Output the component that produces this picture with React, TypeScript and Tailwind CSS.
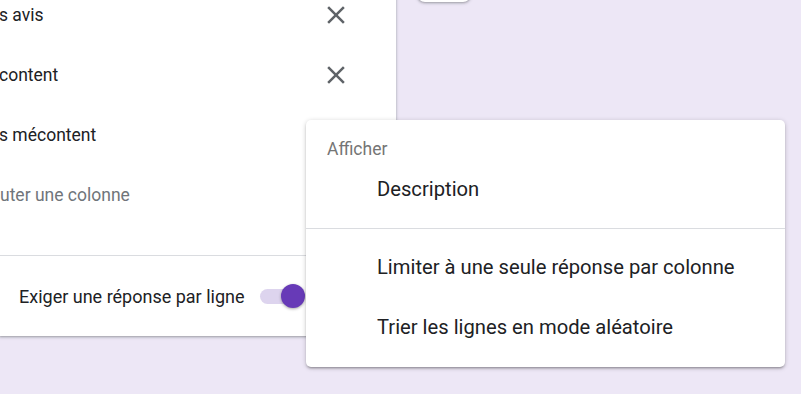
import React from "react";

function CloseIcon() {
  return (
    <svg viewBox="0 0 24 24" className="h-[30px] w-[30px] fill-[#5f6368]">
      <path d="M19 6.41 17.59 5 12 10.59 6.41 5 5 6.41 10.59 12 5 17.59 6.41 19 12 13.41 17.59 19 19 17.59 13.41 12z" />
    </svg>
  );
}

const rows = [
  { label: "s avis", close: true },
  { label: "content", close: true },
  { label: "s mécontent", close: false },
];

export default function App() {
  return (
    <div className="relative h-[394px] w-[801px] overflow-hidden bg-[#ede7f6] font-['Roboto',sans-serif]">
      <div className="flex items-start gap-[21px]">
        {/* grid question card */}
        <div className="-mt-[15px] w-[396px] rounded-br-[10px] bg-white shadow-[0_1px_2px_0_rgba(60,64,67,0.3),0_1px_3px_1px_rgba(60,64,67,0.15)]">
          {rows.map((r) => (
            <div key={r.label} className="flex h-[60px] items-center justify-between pr-[45px]">
              <span className="-ml-px text-[17.5px] text-[#202124]">{r.label}</span>
              {r.close && <CloseIcon />}
            </div>
          ))}
          <div className="flex h-[60px] items-center">
            <span className="text-[17.5px] text-[#70757a]">uter une colonne</span>
          </div>
          <div className="mt-[30px] border-t border-[#dadce0]" />
          <div className="flex h-[80px] items-center pl-[19px]">
            <span className="text-[18px] text-[#202124]">Exiger une réponse par ligne</span>
            <div className="relative ml-[15px] h-[15px] w-[42px] rounded-full bg-[#ddd4ee]">
              <div className="absolute -right-[3px] -top-[5px] h-[24px] w-[24px] rounded-full bg-[#673ab7] shadow-[0_1px_3px_rgba(0,0,0,0.35)]" />
            </div>
          </div>
        </div>
        {/* right floating toolbar, mostly scrolled off */}
        <div className="-mt-[20px] h-[22px] w-[54px] rounded-b-[8px] bg-white shadow-[0_1px_2px_0_rgba(60,64,67,0.3),0_1px_3px_1px_rgba(60,64,67,0.15)]" />
      </div>

      {/* overflow menu */}
      <div className="absolute left-[306px] top-[120px] w-[479px] rounded-[5px] bg-white pt-[9px] pb-[10px] shadow-[0_2px_2px_0_rgba(0,0,0,0.14),0_3px_1px_-2px_rgba(0,0,0,0.12),0_1px_5px_0_rgba(0,0,0,0.2)]">
        <div className="flex h-[40px] items-center pl-[21px] text-[17.5px] text-[#757575]">Afficher</div>
        <div className="flex h-[40px] items-center pl-[71px] text-[20.2px] text-[#202124]">Description</div>
        <div className="mt-[19px] border-t border-[#dadce0]" />
        <div className="pt-[8px]">
          <div className="flex h-[60px] items-center pl-[71px] text-[20.2px] text-[#202124]">
            Limiter à une seule réponse par colonne
          </div>
          <div className="flex h-[60px] items-center pl-[71px] text-[20.2px] text-[#202124]">
            Trier les lignes en mode aléatoire
          </div>
        </div>
      </div>
    </div>
  );
}
